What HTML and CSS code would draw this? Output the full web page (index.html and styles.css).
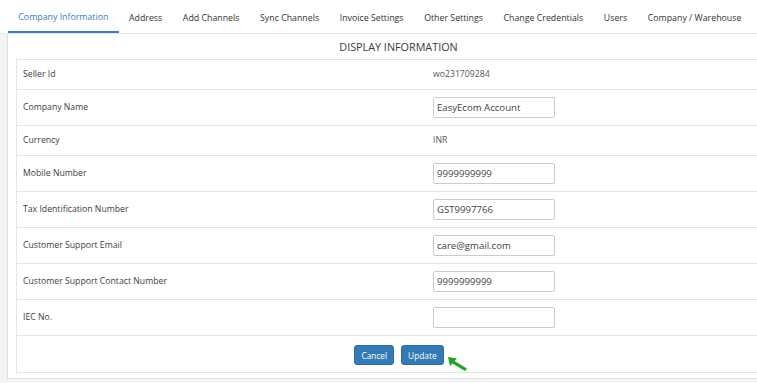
FILE: index.html
```html
<!DOCTYPE html>
<html lang="en">
<head>
  <meta charset="UTF-8">
  <meta name="viewport" content="width=device-width, initial-scale=1.0">
  <title>Company Information</title>
  <link rel="stylesheet" href="styles.css">
</head>
<body>
  <ul class="tabs">
    <li class="tab active">Company Information</li>
    <li class="tab">Address</li>
    <li class="tab">Add Channels</li>
    <li class="tab">Sync Channels</li>
    <li class="tab">Invoice Settings</li>
    <li class="tab">Other Settings</li>
    <li class="tab">Change Credentials</li>
    <li class="tab">Users</li>
    <li class="tab">Company / Warehouse</li>
  </ul>

  <div class="panel">
    <div class="panel-title">DISPLAY INFORMATION</div>

    <div class="info-table">
      <div class="row">
        <div class="label">Seller Id</div>
        <div class="value">wo231709284</div>
      </div>
      <div class="row">
        <div class="label">Company Name</div>
        <div class="value"><input class="field" type="text" value="EasyEcom Account"></div>
      </div>
      <div class="row">
        <div class="label">Currency</div>
        <div class="value">INR</div>
      </div>
      <div class="row">
        <div class="label">Mobile Number</div>
        <div class="value"><input class="field" type="text" value="9999999999"></div>
      </div>
      <div class="row">
        <div class="label">Tax Identification Number</div>
        <div class="value"><input class="field" type="text" value="GST9997766"></div>
      </div>
      <div class="row">
        <div class="label">Customer Support Email</div>
        <div class="value"><input class="field" type="text" value="care@gmail.com"></div>
      </div>
      <div class="row">
        <div class="label">Customer Support Contact Number</div>
        <div class="value"><input class="field" type="text" value="9999999999"></div>
      </div>
      <div class="row">
        <div class="label">IEC No.</div>
        <div class="value"><input class="field" type="text" value=""></div>
      </div>

      <div class="actions">
        <button class="btn">Cancel</button>
        <button class="btn">Update</button>
        <!-- pointer annotation -->
        <svg class="pointer" width="22" height="16" viewBox="0 0 22 16">
          <path d="M1 1 L10 2.5 L7.5 5 L20 12.5 L18 15 L5.5 7.5 L3 10 Z" fill="#1fa51f"/>
        </svg>
      </div>
    </div>
  </div>
</body>
</html>
```

FILE: styles.css
```css
body {
  margin: 0;
  padding: 0;
  font-family: "Open Sans", Arial, sans-serif;
  font-size: 8.7px;
  color: #444;
  background-color: #f4f4f4;
  overflow: hidden;
}

/* Tabs */
.tabs {
  display: flex;
  list-style: none;
  margin: 0;
  padding: 0 0 0 8px;
  height: 33px;
  background-color: #fff;
  border-bottom: 1px solid #e6e6e6;
}

.tab {
  padding: 0 10.3px;
  line-height: 36px;
  font-size: 8.8px;
  color: #333;
  white-space: nowrap;
}

.tab.active {
  color: #3d7cc0;
  border-bottom: 2px solid #3d7cc0;
  line-height: 34px;
}

/* Panel */
.panel {
  width: 782px;
  margin-left: 7px;
  padding: 0 8px 5px;
  box-sizing: border-box;
  background-color: #fff;
  border-left: 1px solid #ddd;
  border-bottom: 1px solid #e3e3e3;
}

.panel-title {
  height: 25px;
  line-height: 25px;
  text-align: center;
  font-size: 10.8px;
  color: #3a3a3a;
}

.info-table {
  border: 1px solid #e6e6e6;
  border-right: none;
}

.row {
  display: grid;
  grid-template-columns: 409px 1fr;
  border-bottom: 1px solid #e6e6e6;
}

.label, .value {
  padding: 7px 6px;
  line-height: 15px;
  display: flex;
  align-items: center;
}

.label {
  color: #3e3e3e;
}

.value {
  padding-left: 7px;
  color: #555;
}

.field {
  width: 122px;
  height: 21px;
  box-sizing: border-box;
  margin: 0;
  padding: 0 3px;
  font-family: inherit;
  font-size: 9.6px;
  color: #444;
  border: 1px solid #ccc;
  border-radius: 2px;
  outline: none;
}

/* Buttons */
.actions {
  position: relative;
  display: flex;
  justify-content: center;
  gap: 7px;
  height: 36px;
  padding-top: 9px;
  box-sizing: border-box;
}

.btn {
  height: 20px;
  padding: 0 6px;
  font-family: inherit;
  font-size: 8.3px;
  color: #fff;
  background-color: #337ab7;
  border: 1px solid #2e6da4;
  border-radius: 3px;
}

.pointer {
  position: absolute;
  left: 430px;
  top: 20px;
}
```
